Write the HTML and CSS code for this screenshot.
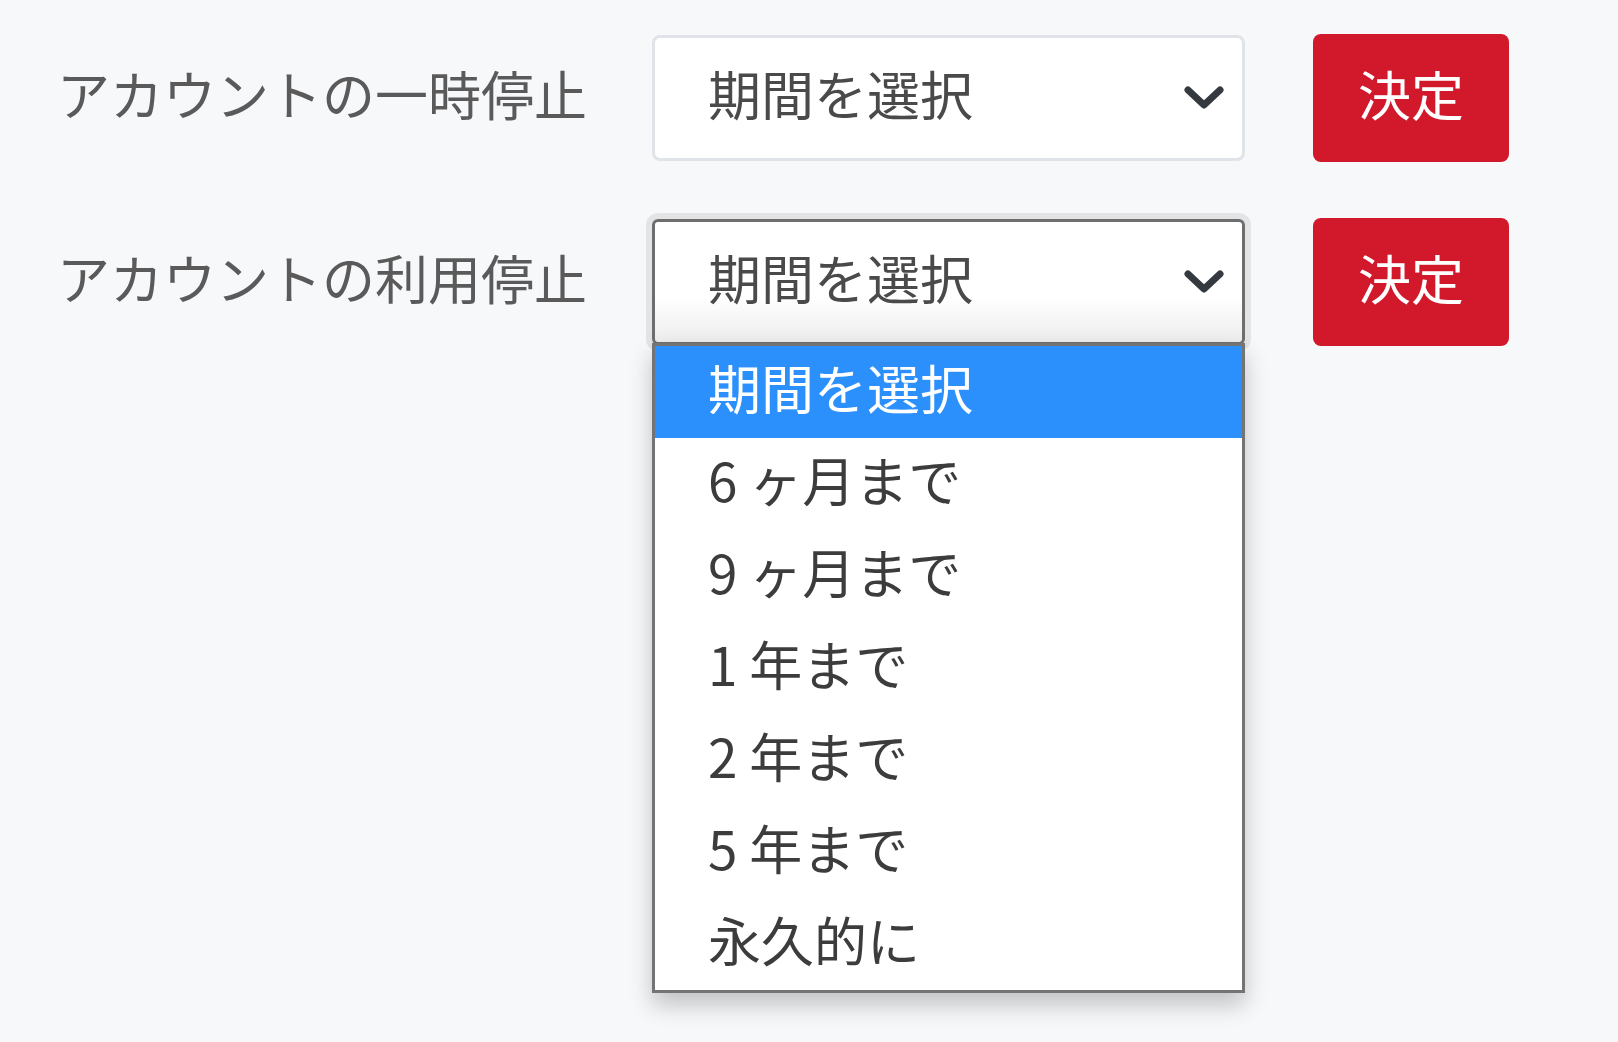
FILE: index.html
```html
<!DOCTYPE html>
<html lang="ja">

<head>
    <meta charset="UTF-8">
    <title>アカウント停止</title>
    <link rel="stylesheet" href="styles.css">
</head>

<body>
    <main class="settings">
        <!-- 一時停止 -->
        <div class="row">
            <label class="row-label">アカウントの一時停止</label>
            <div class="select-wrap">
                <div class="select">
                    <span>期間を選択</span>
                    <svg class="chevron" viewBox="0 0 40 24"><path d="M4 4 L20 19 L36 4" /></svg>
                </div>
            </div>
            <button class="btn-danger">決定</button>
        </div>

        <!-- 利用停止 (open) -->
        <div class="row">
            <label class="row-label">アカウントの利用停止</label>
            <div class="select-wrap">
                <div class="select focus">
                    <span>期間を選択</span>
                    <svg class="chevron" viewBox="0 0 40 24"><path d="M4 4 L20 19 L36 4" /></svg>
                </div>
                <ul class="options">
                    <li class="selected">期間を選択</li>
                    <li>6 ヶ月まで</li>
                    <li>9 ヶ月まで</li>
                    <li>1 年まで</li>
                    <li>2 年まで</li>
                    <li>5 年まで</li>
                    <li>永久的に</li>
                </ul>
            </div>
            <button class="btn-danger">決定</button>
        </div>
    </main>
</body>

</html>
```

FILE: styles.css
```css
body {
    margin: 0;
    background: #f7f8fa;
    font-family: "Noto Sans CJK JP", "Noto Sans", sans-serif;
    height: 100vh;
}

.settings {
    padding: 34px 0 0 57px;
    display: flex;
    flex-direction: column;
    gap: 56px;
}

.row {
    display: flex;
    align-items: center;
    height: 128px;
}

.row-label {
    width: 595px;
    font-size: 53px;
    line-height: 1;
    padding-bottom: 10px;
    color: #5a5a5a;
}

.select-wrap {
    position: relative;
    width: 593px;
}

.select {
    box-sizing: border-box;
    height: 126px;
    background: #fff;
    border: 3px solid #e0e3e7;
    border-radius: 8px;
    padding: 0 18px 0 53px;
    display: flex;
    align-items: center;
    justify-content: space-between;
    font-size: 53px;
    color: #4a4a4a;
}

.select span {
    line-height: 1;
    padding-bottom: 10px;
}

.select.focus {
    border-color: #6e6e6e;
    border-radius: 6px;
    background: linear-gradient(#fff 62%, #ededed);
    box-shadow: 0 0 0 6px rgba(0, 0, 0, .08);
}

.chevron {
    width: 40px;
    height: 24px;
}

.chevron path {
    fill: none;
    stroke: #343a40;
    stroke-width: 7;
    stroke-linecap: round;
    stroke-linejoin: round;
}

.options {
    position: absolute;
    top: 100%;
    left: 0;
    right: 0;
    margin: -2px 0 0;
    padding: 0;
    list-style: none;
    background: #fff;
    border: 3px solid #747474;
    box-shadow: 0 12px 22px rgba(0, 0, 0, .22);
    z-index: 2;
}

.options li {
    height: 92px;
    line-height: 82px;
    padding: 0 0 10px 53px;
    box-sizing: border-box;
    font-size: 53px;
    color: #3c3c3c;
}

.options li.selected {
    background: #2b8ffc;
    color: #fff;
}

.btn-danger {
    margin-left: 68px;
    width: 196px;
    height: 128px;
    padding: 0 0 10px;
    border: none;
    border-radius: 8px;
    background: #d1192b;
    color: #fff;
    font-family: inherit;
    font-size: 53px;
    line-height: 1;
    cursor: pointer;
}
```
